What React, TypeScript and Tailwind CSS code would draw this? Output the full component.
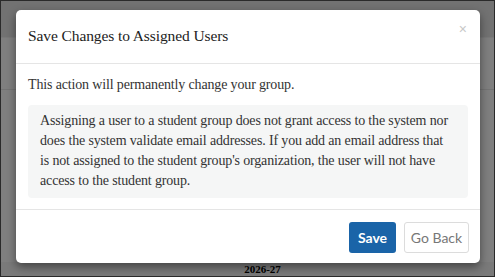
export default function App() {
  const serif = { fontFamily: '"Liberation Serif", serif' };
  return (
    <div className="relative w-[495px] h-[277px] overflow-hidden border border-[#2a2a2a] bg-white">
      {/* page behind the dialog */}
      <div className="flex flex-col h-full">
        <div className="h-[37px] bg-[#e4e4e4] border-b border-[#f2f2f2]" />
        <div className="h-[52px] bg-white border-b border-[#e8e8e8]" />
        <div className="flex-1 bg-white" />
        <div
          className="h-[15px] bg-[#f4f4f4] border-t border-[#ffffff] flex justify-center text-[11px] font-bold leading-[14px] text-black pl-[30px]"
          style={serif}
        >
          2026-27
        </div>
      </div>

      {/* backdrop + dialog */}
      <div className="absolute inset-0 bg-black/50 px-[15px] pt-[9px]">
        <div className="w-[464px] bg-white rounded-[5px] shadow-[0_4px_10px_rgba(0,0,0,0.45)]" style={serif}>
          <div className="relative h-[54px] border-b border-[#e5e5e5] px-[12px] pt-[15px]">
            <h1 className="text-[15.5px] leading-[22px] tracking-[-0.1px] text-[#222]">Save Changes to Assigned Users</h1>
            <button className="absolute right-[13px] top-[12px] text-[14px] leading-none text-[#c8c8c8]" style={{ fontFamily: '"Liberation Sans", sans-serif' }}>
              ×
            </button>
          </div>
          <div className="px-[12px] pt-[11px] pb-[11px] text-[14px] leading-[20px] tracking-[-0.15px] text-[#333]">
            <p>This action will permanently change your group.</p>
            <div className="mt-[10px] rounded-[4px] bg-[#f5f6f6] pl-[12px] pr-[16px] pt-[6px] pb-[7px]">
              Assigning a user to a student group does not grant access to the system nor does the system validate email addresses. If you add an email address that is not assigned to the student group's organization, the user will not have access to the student group.
            </div>
          </div>
          <div
            className="flex justify-end gap-[8px] border-t border-[#e5e5e5] px-[11px] pt-[12px] pb-[10px]"
            style={{ fontFamily: 'Lato, sans-serif' }}
          >
            <button className="h-[31px] w-[47px] rounded-[3px] bg-[#1a64a8] text-[14px] font-bold text-white">Save</button>
            <button className="h-[31px] w-[65px] rounded-[3px] border border-[#dcdcdc] bg-white text-[14px] text-[#777]">Go Back</button>
          </div>
        </div>
      </div>
    </div>
  );
}
